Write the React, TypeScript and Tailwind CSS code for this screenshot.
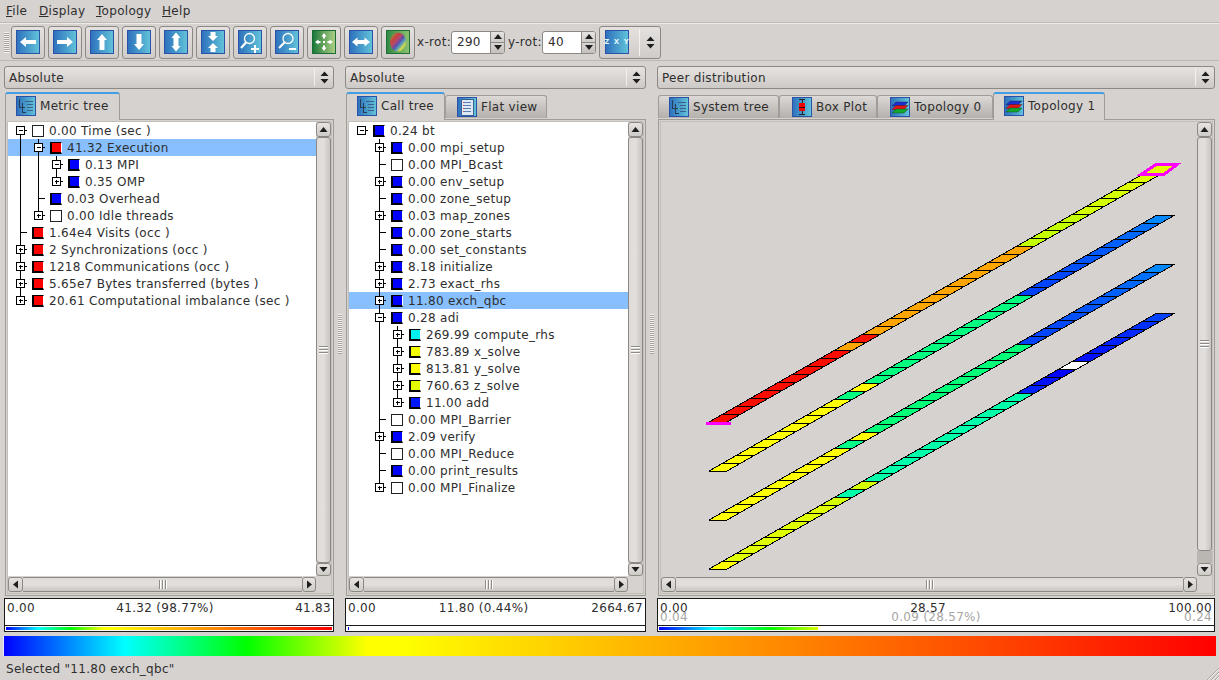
import React from "react";

const BLUEBOX = "bg-linear-to-r from-[#2f72bd] to-[#62c2d8] border border-[#2b52a6]";
const SPECTRUM =
  "bg-[linear-gradient(to_right,#0000ff_0%,#00ffff_10%,#00ff00_20%,#ffff00_30%,#ffff00_33%,#ff0000_100%)]";

function Box({ children, cls = BLUEBOX, size = 24 }: { children?: React.ReactNode; cls?: string; size?: number }) {
  return (
    <div className={`${cls} shrink-0 flex items-center justify-center ${size === 24 ? "w-[24px] h-[24px]" : "w-[20px] h-[20px]"}`}>
      {children}
    </div>
  );
}

function Poly({ d }: { d: string }) {
  return (
    <svg width="22" height="22" viewBox="1 1 22 22" className="block">
      <path d={d} fill="#fff" />
    </svg>
  );
}

function Lens({ minus }: { minus?: boolean }) {
  return (
    <svg width="22" height="22" viewBox="1 1 22 22" className="block" fill="none" stroke="#fff">
      <circle cx={minus ? 13 : 11.5} cy="8.5" r="5" strokeWidth="1.3" />
      <path d={minus ? "M9.5 12.5L4 18" : "M8 12.5L3 18"} strokeWidth="2.2" />
      {minus ? <path d="M14 19H21" strokeWidth="2" /> : <path d="M13 19H21M17 15V23" strokeWidth="2" />}
    </svg>
  );
}

const TOOLS: React.ReactNode[] = [
  <Box key="a"><Poly d="M4 12L10 7V10H20V14H10V17Z" /></Box>,
  <Box key="b"><Poly d="M20 12L14 7V10H4V14H14V17Z" /></Box>,
  <Box key="c"><Poly d="M12 4L17 10H14.5V20H9.5V10H7Z" /></Box>,
  <Box key="d"><Poly d="M12 20L17 14H14.5V4H9.5V14H7Z" /></Box>,
  <Box key="e"><Poly d="M12 2.5L16.5 8H14.5V16H16.5L12 21.5L7.5 16H9.5V8H7.5Z" /></Box>,
  <Box key="f"><Poly d="M9.5 2H14.5V6H17L12 11L7 6H9.5ZM9.5 22H14.5V18H17L12 13L7 18H9.5Z" /></Box>,
  <Box key="g"><Lens /></Box>,
  <Box key="h"><Lens minus /></Box>,
  <Box key="i" cls="bg-linear-to-r from-[#127a3c] to-[#a9cf83] border border-[#1c6b34]">
    <Poly d="M3 12L6.5 9.5V11H8.5V13H6.5V14.5ZM21 12L17.5 9.5V11H15.5V13H17.5V14.5ZM12 3L9.5 6.5H11V8.5H13V6.5H14.5ZM12 21L9.5 17.5H11V15.5H13V17.5H14.5ZM11 11H13V13H11Z" />
  </Box>,
  <Box key="j"><Poly d="M3 12L8.5 7.5V10H15.5V7.5L21 12L15.5 16.5V14H8.5V16.5Z" /></Box>,
  <Box key="k" cls="bg-linear-to-r from-[#2f8a44] to-[#8cc070] border border-[#1f6f38]">
    <svg width="22" height="22" viewBox="0 0 22 22" className="block">
      <defs>
        <linearGradient id="ball" x1="0.1" y1="0.1" x2="0.9" y2="0.9">
          <stop offset="0" stopColor="#8fa04a" />
          <stop offset="0.22" stopColor="#c8453c" />
          <stop offset="0.42" stopColor="#b04a70" />
          <stop offset="0.55" stopColor="#5a4fb0" />
          <stop offset="0.7" stopColor="#5aa0b8" />
          <stop offset="0.85" stopColor="#dcdc48" />
          <stop offset="1" stopColor="#5fae55" />
        </linearGradient>
      </defs>
      <ellipse cx="11" cy="11" rx="8" ry="9.5" fill="url(#ball)" />
    </svg>
  </Box>,
];

function TreeIcon() {
  return (
    <Box size={20}>
      <svg width="18" height="18" viewBox="0 0 18 18" className="block" fill="none" stroke="#2a3b55" shapeRendering="crispEdges">
        <path d="M2.5 2V10H5.5M5.5 6V15H8.5M5.5 10H8.5" />
        <path d="M8 4.5H16M10 7.5H16M10 10.5H16M10 13.5H16" stroke="#3d5f8c" />
        <path d="M8 10.5H9" stroke="#4fc06a" />
      </svg>
    </Box>
  );
}
function FlatIcon() {
  return (
    <Box size={20}>
      <svg width="18" height="18" viewBox="0 0 18 18" className="block" shapeRendering="crispEdges">
        <rect x="3" y="1" width="12" height="16" fill="#dfe9f5" stroke="#3a5f95" />
        <path d="M5 4.5H13M5 7.5H13M5 10.5H13M5 13.5H13" stroke="#5b7fb5" />
        <path d="M5 4.5H6M5 7.5H6M5 10.5H6M5 13.5H6" stroke="#d04a4a" />
      </svg>
    </Box>
  );
}
function BoxPlotIcon() {
  return (
    <Box size={20}>
      <svg width="18" height="18" viewBox="0 0 18 18" className="block" shapeRendering="crispEdges">
        <path d="M6 1.5H12M9 1.5V16.5M6 16.5H12" stroke="#222" fill="none" />
        <rect x="6" y="5" width="6" height="8" fill="#f00000" />
        <path d="M6 9.5H12" stroke="#400" />
      </svg>
    </Box>
  );
}
function TopoIcon() {
  return (
    <Box size={20}>
      <svg width="18" height="18" viewBox="0 0 18 18" className="block">
        <path d="M1 8L5 4H17L13 8Z" fill="#1c2fd0" stroke="#123" strokeWidth="0.4" />
        <path d="M1 11.5L5 7.5H17L13 11.5Z" fill="#e01515" stroke="#411" strokeWidth="0.4" />
        <path d="M1 15L5 11H17L13 15Z" fill="#12a82e" stroke="#131" strokeWidth="0.4" />
      </svg>
    </Box>
  );
}

function UpDown() {
  return (
    <svg width="9" height="13" viewBox="0 0 9 13" className="block">
      <path d="M4.5 0.5L8.5 5H0.5Z M4.5 12.5L8.5 8H0.5Z" fill="#1e1e1e" />
    </svg>
  );
}

function Combo({ text, cls }: { text: string; cls?: string }) {
  return (
    <div className={`h-[23px] flex items-center rounded-[3px] border border-[#8c8884] bg-linear-to-b from-[#e6e3e0] to-[#cdc9c6] pl-[4px] ${cls ?? ""}`}>
      <span className="flex-1">{text}</span>
      <div className="w-[19px] h-[17px] border-l border-l-[#f4f2f0] flex items-center justify-center">
        <UpDown />
      </div>
    </div>
  );
}

function Spin({ value }: { value: string }) {
  return (
    <div className="w-[54px] h-[23px] ml-[3px] flex rounded-[3px] border border-[#8c8884] bg-white overflow-hidden shrink-0">
      <div className="flex-1 flex items-center pl-[5px]">{value}</div>
      <div className="w-[14px] flex flex-col border-l border-[#8c8884]">
        <div className="flex-1 flex items-center justify-center bg-linear-to-b from-[#e6e3e0] to-[#cfcbc8] border-b border-[#8c8884]">
          <svg width="8" height="5" className="block"><path d="M4 0L8 5H0Z" fill="#1e1e1e" /></svg>
        </div>
        <div className="flex-1 flex items-center justify-center bg-linear-to-b from-[#d8d5d2] to-[#c4c0bd]">
          <svg width="8" height="5" className="block"><path d="M4 5L8 0H0Z" fill="#1e1e1e" /></svg>
        </div>
      </div>
    </div>
  );
}

function Tab({ icon, label, active, cls, pad = "pl-[12px]" }: { icon: React.ReactNode; label: string; active?: boolean; cls: string; pad?: string }) {
  if (active) {
    return (
      <div className={`relative z-10 h-[28px] flex items-center pl-[10px] pb-[3px] gap-[4px] -mb-px bg-[#d6d2cf] border-x border-[#a09c98] rounded-t-[3px] border-t-2 border-t-[#3f9fe2] ${cls}`}>
        {icon}
        <span>{label}</span>
      </div>
    );
  }
  return (
    <div className={`h-[23px] mt-[3px] flex items-center ${pad} gap-[4px] border-x border-t border-[#a09c98] rounded-t-[3px] bg-linear-to-b from-[#dcd9d6] to-[#b4b0ac] ${cls}`}>
      {icon}
      <span>{label}</span>
    </div>
  );
}

function Grip({ vertical }: { vertical?: boolean }) {
  return vertical ? (
    <div className="flex-1 flex flex-col items-center justify-center gap-px rounded-[3px] border border-[#8c8884] bg-linear-to-r from-[#dedbd8] via-[#e2dfdc] to-[#c9c5c2]">
      <div className="w-[9px] h-[2px] bg-[#8f8b87] border-b border-white" />
      <div className="w-[9px] h-[2px] bg-[#8f8b87] border-b border-white" />
      <div className="w-[9px] h-[2px] bg-[#8f8b87] border-b border-white" />
    </div>
  ) : (
    <div className="flex-1 flex items-center justify-center gap-px border-y border-[#8c8884] bg-linear-to-b from-[#dedbd8] via-[#e2dfdc] to-[#c9c5c2]">
      <div className="h-[9px] w-[2px] bg-[#8f8b87] border-r border-white" />
      <div className="h-[9px] w-[2px] bg-[#8f8b87] border-r border-white" />
      <div className="h-[9px] w-[2px] bg-[#8f8b87] border-r border-white" />
    </div>
  );
}

function ArrowBtn({ dir, cls }: { dir: "u" | "d" | "l" | "r"; cls: string }) {
  const p = { u: "M4.5 2L8.5 7H0.5Z", d: "M4.5 7L8.5 2H0.5Z", l: "M2 4.5L7 0.5V8.5Z", r: "M7 4.5L2 0.5V8.5Z" }[dir];
  return (
    <div className={`shrink-0 flex items-center justify-center border border-[#8c8884] rounded-[3px] bg-linear-to-b from-[#e6e3e0] to-[#cfcbc8] ${cls}`}>
      <svg width="9" height="9" className="block"><path d={p} fill="#1e1e1e" /></svg>
    </div>
  );
}

function VScroll({ trough }: { trough?: boolean }) {
  return (
    <div className="flex flex-col h-full">
      <ArrowBtn dir="u" cls="h-[15px] w-[15px]" />
      <Grip vertical />
      {trough && <div className="h-[12px] bg-[#bab6b2]" />}
      <ArrowBtn dir="d" cls="h-[13px] w-[15px]" />
    </div>
  );
}

function HScroll() {
  return (
    <div className="flex h-[15px] mt-px">
      <ArrowBtn dir="l" cls="w-[15px] h-[15px]" />
      <Grip />
      <ArrowBtn dir="r" cls="w-[14px] h-[15px]" />
    </div>
  );
}

function Guide({ k }: { k: string }) {
  const lower = k.toLowerCase();
  const hasBox = lower === "m" || lower === "p" || lower === "r";
  const up = k === "|" || "mpt".includes(k) || "MPT".includes(k);
  const down = k === "|" || "mpt".includes(k) || k === "r";
  return (
    <svg width="18" height="17" viewBox="0 0 18 17" className="block shrink-0" shapeRendering="crispEdges">
      {k !== " " && (
        <>
          {up && <path d="M9.5 0V8.5" stroke="#000" />}
          {down && <path d="M9.5 8.5V17" stroke="#000" />}
          {k !== "|" && <path d="M9.5 8.5H15.5" stroke="#000" />}
          {hasBox && (
            <>
              <rect x="5.5" y="4.5" width="8" height="8" fill="#fff" stroke="#000" />
              <path d="M7.5 8.5H11.5" stroke="#000" />
              {lower === "p" && <path d="M9.5 6.5V10.5" stroke="#000" />}
            </>
          )}
        </>
      )}
    </svg>
  );
}

const SQ: Record<string, string> = {
  r: "bg-[#ff0000]",
  b: "bg-[#0000ff]",
  c: "bg-[#00f0f0]",
  y: "bg-[#f4ff00]",
  Y: "bg-[#ffff00]",
  z: "bg-[#e2ff00]",
  a: "bg-[#0018ff]",
};

function Square({ c }: { c: string }) {
  if (c === "w") {
    return <div className="w-[12px] h-[12px] shrink-0 bg-white border border-[#222]" />;
  }
  return (
    <div className={`w-[12px] h-[12px] shrink-0 border-t border-t-black border-l-2 border-l-black border-b-2 border-b-black border-r border-r-white ${SQ[c]}`} />
  );
}

type Row = [string, string, string, boolean?];

function Tree({ rows }: { rows: Row[] }) {
  return (
    <div className="h-full bg-white overflow-hidden">
      {rows.map(([g, c, t, sel], i) => (
        <div key={i} className={`h-[17px] flex items-center pl-[3px] ${sel ? "bg-[#87bfff]" : ""}`}>
          {g.split("").map((k, j) => (
            <Guide key={j} k={k} />
          ))}
          <div className="ml-[3px]">
            <Square c={c} />
          </div>
          <span className="ml-[5px] whitespace-nowrap leading-[17px] pt-px">{t}</span>
        </div>
      ))}
    </div>
  );
}

function Pane({ children, trough }: { children: React.ReactNode; trough?: boolean }) {
  return (
    <div className="h-[477px] ml-px border border-[#a09c98] p-px">
      <div className="h-full border border-[#c2beba] grid grid-cols-[1fr_15px] grid-rows-[454px_16px]">
        <div className="min-w-0 overflow-hidden">{children}</div>
        <VScroll trough={trough} />
        <HScroll />
        <div />
      </div>
    </div>
  );
}

function ValueBar({ a, b, c, strip, second }: { a: string; b: string; c: string; strip: React.ReactNode; second?: [string, string, string] }) {
  return (
    <div className="mt-[2px] h-[34px] bg-white border border-[#1a1a1a] flex flex-col">
      <div className="h-[27px] overflow-hidden px-[2px] pt-[2px]">
        <div className="flex justify-between leading-[15px] h-[15px]">
          <span>{a}</span>
          <span>{b}</span>
          <span>{c}</span>
        </div>
        {second && (
          <div className="flex justify-between leading-[15px] h-[15px] -mt-[6px] text-[#a6a6a6]">
            <span>{second[0]}</span>
            <span>{second[1]}</span>
            <span>{second[2]}</span>
          </div>
        )}
      </div>
      <div className="flex-1 border-t border-[#1a1a1a] px-px py-px">{strip}</div>
    </div>
  );
}

const METRIC: Row[] = [
  ["r", "w", "0.00 Time (sec )"],
  ["|m", "r", "41.32 Execution", true],
  ["||m", "b", "0.13 MPI"],
  ["||P", "b", "0.35 OMP"],
  ["|t", "b", "0.03 Overhead"],
  ["|P", "w", "0.00 Idle threads"],
  ["t", "r", "1.64e4 Visits (occ )"],
  ["p", "r", "2 Synchronizations (occ )"],
  ["p", "r", "1218 Communications (occ )"],
  ["p", "r", "5.65e7 Bytes transferred (bytes )"],
  ["P", "r", "20.61 Computational imbalance (sec )"],
];

const CALL: Row[] = [
  ["R", "b", "0.24 bt"],
  [" p", "b", "0.00 mpi_setup"],
  [" t", "w", "0.00 MPI_Bcast"],
  [" p", "b", "0.00 env_setup"],
  [" t", "b", "0.00 zone_setup"],
  [" p", "b", "0.03 map_zones"],
  [" t", "b", "0.00 zone_starts"],
  [" t", "b", "0.00 set_constants"],
  [" p", "b", "8.18 initialize"],
  [" p", "b", "2.73 exact_rhs"],
  [" p", "b", "11.80 exch_qbc", true],
  [" m", "b", "0.28 adi"],
  [" |p", "c", "269.99 compute_rhs"],
  [" |p", "y", "783.89 x_solve"],
  [" |p", "Y", "813.81 y_solve"],
  [" |p", "z", "760.63 z_solve"],
  [" |P", "a", "11.00 add"],
  [" t", "w", "0.00 MPI_Barrier"],
  [" p", "b", "2.09 verify"],
  [" t", "w", "0.00 MPI_Reduce"],
  [" t", "b", "0.00 print_results"],
  [" P", "w", "0.00 MPI_Finalize"],
];

const rep = (c: string, n: number) => Array<string>(n).fill(c);
const BLUES = ["#0040ff", "#0044ff", "#0048ff", "#0050ff", "#0054ff", "#0058ff", "#0060ff", "#0068ff", "#0070ff", "#0088ff"];
const STRIPS: { y0: number; colors: string[] }[] = [
  {
    y0: 422,
    colors: [
      ...rep("#ff0c00", 9),
      "#ffa500",
      "#ff1000",
      ...rep("#ffa500", 11),
      ...rep("#c4ff00", 4),
      ...rep("#d4ff00", 3),
      ...rep("#e0ff00", 2),
    ],
  },
  {
    y0: 471,
    colors: [...rep("#ffff00", 9), "#00ff80", "#ffff00", ...rep("#00ff80", 11), ...BLUES],
  },
  {
    y0: 520,
    colors: [...rep("#ffff00", 9), "#00ff88", "#ffff00", ...rep("#00ff78", 11), ...BLUES],
  },
  {
    y0: 569,
    colors: [
      "#ffff00",
      ...rep("#e0ff00", 7),
      "#d4ff00",
      "#00ffaa",
      "#d4ff00",
      ...rep("#00ffaa", 11),
      "#0020ff",
      "#0010ff",
      "#0000ff",
      "#ffffff",
      "#0010ff",
      "#0018ff",
      "#0020ff",
      "#0028ff",
      "#0030ff",
      "#0040ff",
    ],
  },
];

function Topology() {
  const ox = 661;
  const oy = 122;
  const X = (x: number) => x - ox;
  const Y = (y: number) => y - oy;
  return (
    <svg width="535" height="454" className="block" shapeRendering="crispEdges">
      {STRIPS.map((s, si) => (
        <g key={si}>
          {s.colors.map((col, i) => {
            const x = 709 + 14 * i;
            const y = s.y0 - 8 * i;
            return (
              <polygon
                key={i}
                points={`${X(x)},${Y(y)} ${X(x + 18)},${Y(y)} ${X(x + 32)},${Y(y - 8)} ${X(x + 14)},${Y(y - 8)}`}
                fill={col}
              />
            );
          })}
          {s.colors.map((_, i) => {
            const x = 709 + 14 * i;
            const y = s.y0 - 8 * i;
            return <line key={i} x1={X(x)} y1={Y(y) + 0.5} x2={X(x + 18)} y2={Y(y) + 0.5} stroke="#000" />;
          })}
          <line x1={X(709 + 14 * s.colors.length)} y1={Y(s.y0 - 8 * s.colors.length) + 0.5} x2={X(727 + 14 * s.colors.length)} y2={Y(s.y0 - 8 * s.colors.length) + 0.5} stroke="#000" />
          <line x1={X(709)} y1={Y(s.y0)} x2={X(709 + 14 * s.colors.length)} y2={Y(s.y0 - 8 * s.colors.length)} stroke="#000" />
          <line x1={X(727)} y1={Y(s.y0)} x2={X(727 + 14 * s.colors.length)} y2={Y(s.y0 - 8 * s.colors.length)} stroke="#000" />
        </g>
      ))}
      <polygon
        points={`${X(1141)},${Y(174.5)} ${X(1156)},${Y(164.5)} ${X(1177)},${Y(164.5)} ${X(1164)},${Y(174.5)}`}
        fill="#e6ff00"
        stroke="#ff00ff"
        strokeWidth="3"
      />
      <rect x={X(706)} y={Y(422)} width="25" height="3" fill="#ff00ff" />
    </svg>
  );
}

function SplitHandle() {
  return (
    <div className="w-[11px] shrink-0 flex items-center justify-center pb-[30px]">
      <div className="w-[4px] h-[40px] bg-[repeating-linear-gradient(to_bottom,#f2f0ee_0,#f2f0ee_1px,#a8a49f_1px,#a8a49f_2px)]" />
    </div>
  );
}

export default function App() {
  return (
    <div className="relative w-[1219px] h-[680px] overflow-hidden flex flex-col bg-[#d6d2cf] text-[#2e2e2e] text-[12px] tracking-[0.3px] font-['DejaVu_Sans',sans-serif]">
      <div className="h-[23px] flex items-center pl-[6px] border-b border-[#bdb9b5]">
        <span className="w-[33px]"><u>F</u>ile</span>
        <span className="w-[57px]"><u>D</u>isplay</span>
        <span className="w-[66px]"><u>T</u>opology</span>
        <span><u>H</u>elp</span>
      </div>

      <div className="h-[38px] flex items-center pl-[4px] border-b border-[#bdb9b5] border-t border-t-[#ecebe9]">
        <div className="w-[5px] h-[21px] mr-[2px] bg-[repeating-linear-gradient(to_bottom,#f2f0ee_0,#f2f0ee_1px,#a8a49f_1px,#a8a49f_2px)]" />
        <div className="flex gap-[3px]">
          {TOOLS.map((t, i) => (
            <div key={i} className="w-[34px] h-[33px] flex items-center justify-center rounded-[3px] border border-[#8c8884] bg-linear-to-b from-[#e4e1de] to-[#d0ccc9]">
              {t}
            </div>
          ))}
        </div>
        <span className="w-[31px] ml-[2px] whitespace-nowrap">x-rot:</span>
        <Spin value="290" />
        <span className="w-[31px] ml-[3px] whitespace-nowrap">y-rot:</span>
        <Spin value="40" />
        <div className="w-[62px] h-[33px] ml-[3px] flex items-center rounded-[3px] border border-[#8c8884] bg-linear-to-b from-[#e4e1de] to-[#d0ccc9] pl-[5px]">
          <Box>
            <span className="text-[7px] font-bold text-[#dff3fa] tracking-[1px] whitespace-nowrap">Z X Y</span>
          </Box>
          <div className="ml-[10px] h-[27px] border-l border-l-[#f4f2f0] flex-1 flex items-center justify-center">
            <UpDown />
          </div>
        </div>
      </div>

      <div className="flex pl-[4px] pt-[5px]">
        <div className="w-[330px] shrink-0">
          <Combo text="Absolute" />
          <div className="flex h-[27px] mt-[3px] pl-px">
            <Tab active icon={<TreeIcon />} label="Metric tree" cls="w-[115px]" />
          </div>
          <Pane>
            <Tree rows={METRIC} />
          </Pane>
          <ValueBar
            a="0.00"
            b="41.32 (98.77%)"
            c="41.83"
            strip={<div className={`h-[3px] ${SPECTRUM}`} />}
          />
        </div>

        <SplitHandle />

        <div className="w-[301px] shrink-0">
          <Combo text="Absolute" />
          <div className="flex h-[27px] mt-[3px] pl-px">
            <Tab active icon={<TreeIcon />} label="Call tree" cls="w-[99px]" />
            <Tab icon={<FlatIcon />} label="Flat view" cls="w-[102px]" pad="pl-[11px]" />
          </div>
          <Pane>
            <Tree rows={CALL} />
          </Pane>
          <ValueBar
            a="0.00"
            b="11.80 (0.44%)"
            c="2664.67"
            strip={<div className="h-[3px] w-px ml-px bg-[#0000ff]" />}
          />
        </div>

        <SplitHandle />

        <div className="w-[558px] shrink-0">
          <Combo text="Peer distribution" />
          <div className="flex h-[27px] mt-[3px] pl-px">
            <Tab icon={<TreeIcon />} label="System tree" cls="w-[121px]" pad="pl-[10px]" />
            <Tab icon={<BoxPlotIcon />} label="Box Plot" cls="w-[98px]" />
            <Tab icon={<TopoIcon />} label="Topology 0" cls="w-[116px]" />
            <Tab active icon={<TopoIcon />} label="Topology 1" cls="w-[112px]" />
          </div>
          <Pane trough>
            <Topology />
          </Pane>
          <ValueBar
            a="0.00"
            b="28.57"
            c="100.00"
            second={["0.04", "0.09 (28.57%)", "0.24"]}
            strip={
              <div className="h-[3px] w-[28.7%] overflow-hidden">
                <div className={`h-[3px] w-[556px] ${SPECTRUM}`} />
              </div>
            }
          />
        </div>
      </div>

      <div className={`h-[20px] mt-[4px] mx-[3px] shrink-0 border-l border-l-[#e8e6ff] ${SPECTRUM}`} />

      <div className="flex-1 flex items-center pl-[6px] pt-[2px]">Selected "11.80 exch_qbc"</div>

      <svg width="14" height="14" viewBox="0 0 14 14" className="absolute right-0 bottom-0 block">
        <path d="M14 2L2 14M14 6L6 14M14 10L10 14" stroke="#a8a49f" strokeWidth="1" />
        <path d="M14 3L3 14M14 7L7 14M14 11L11 14" stroke="#f2f0ee" strokeWidth="1" />
      </svg>
    </div>
  );
}
